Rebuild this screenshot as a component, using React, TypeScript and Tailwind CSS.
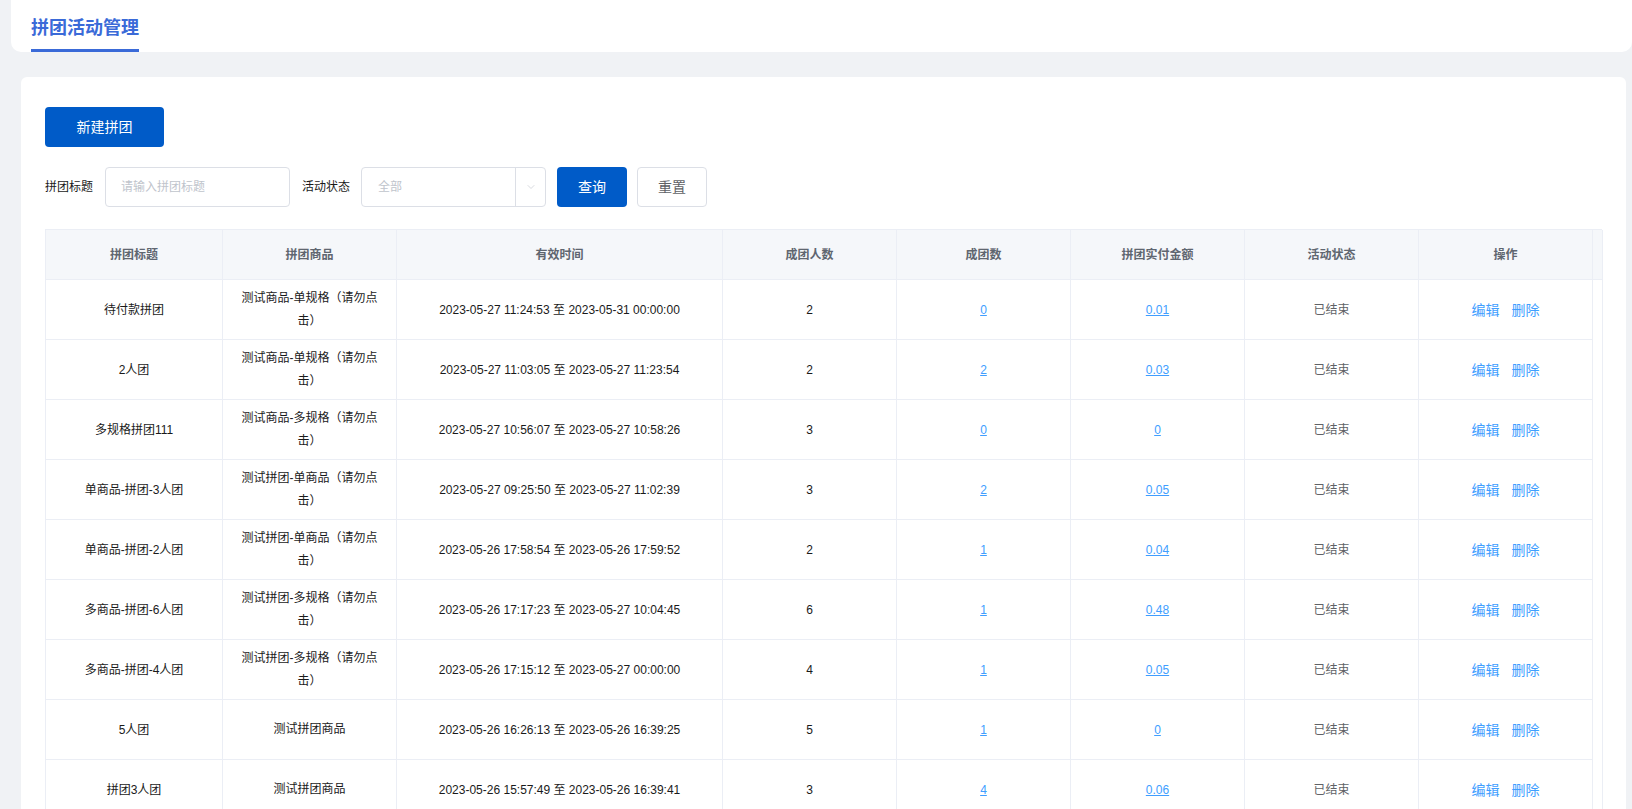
import { ChevronDown } from 'lucide-react';

type Row = {
  title: string;
  product: string;
  time: string;
  people: string;
  groups: string;
  amount: string;
};

const ROWS: Row[] = [
  { title: '待付款拼团', product: '测试商品-单规格（请勿点击）', time: '2023-05-27 11:24:53 至 2023-05-31 00:00:00', people: '2', groups: '0', amount: '0.01' },
  { title: '2人团', product: '测试商品-单规格（请勿点击）', time: '2023-05-27 11:03:05 至 2023-05-27 11:23:54', people: '2', groups: '2', amount: '0.03' },
  { title: '多规格拼团111', product: '测试商品-多规格（请勿点击）', time: '2023-05-27 10:56:07 至 2023-05-27 10:58:26', people: '3', groups: '0', amount: '0' },
  { title: '单商品-拼团-3人团', product: '测试拼团-单商品（请勿点击）', time: '2023-05-27 09:25:50 至 2023-05-27 11:02:39', people: '3', groups: '2', amount: '0.05' },
  { title: '单商品-拼团-2人团', product: '测试拼团-单商品（请勿点击）', time: '2023-05-26 17:58:54 至 2023-05-26 17:59:52', people: '2', groups: '1', amount: '0.04' },
  { title: '多商品-拼团-6人团', product: '测试拼团-多规格（请勿点击）', time: '2023-05-26 17:17:23 至 2023-05-27 10:04:45', people: '6', groups: '1', amount: '0.48' },
  { title: '多商品-拼团-4人团', product: '测试拼团-多规格（请勿点击）', time: '2023-05-26 17:15:12 至 2023-05-27 00:00:00', people: '4', groups: '1', amount: '0.05' },
  { title: '5人团', product: '测试拼团商品', time: '2023-05-26 16:26:13 至 2023-05-26 16:39:25', people: '5', groups: '1', amount: '0' },
  { title: '拼团3人团', product: '测试拼团商品', time: '2023-05-26 15:57:49 至 2023-05-26 16:39:41', people: '3', groups: '4', amount: '0.06' },
];

const HEADERS = ['拼团标题', '拼团商品', '有效时间', '成团人数', '成团数', '拼团实付金额', '活动状态', '操作'];

const GRID = 'grid grid-cols-[177px_174px_326px_174px_174px_174px_174px_174px_10px]';

export default function App() {
  return (
    <div className="h-screen overflow-hidden bg-[#f0f2f5] font-['Liberation_Sans','Noto_Sans_CJK_SC',sans-serif] text-[#1a1a1a]">
      {/* Tabs bar */}
      <div className="ml-[11px] h-[52px] bg-white rounded-b-[10px] pl-5 flex">
        <div className="flex flex-col">
          <div className="mt-4 text-[18px] leading-6 font-bold text-[#3a6ad8]">拼团活动管理</div>
          <div className="mt-auto h-[3px] bg-[#3a6ad8]" />
        </div>
      </div>

      {/* Main card */}
      <div className="mt-[25px] ml-[21px] mr-[6px] bg-white rounded-md px-6 pt-[30px] pb-6">
        <button className="h-10 w-[119px] rounded-[4px] bg-[#005bc8] text-white text-sm">新建拼团</button>

        {/* Filters */}
        <div className="mt-5 flex items-center h-10 text-xs">
          <span>拼团标题</span>
          <div className="ml-3 w-[185px] h-10 border border-[#dcdfe6] rounded-[4px] flex items-center px-[15px] text-[#c0c4cc]">
            请输入拼团标题
          </div>
          <span className="ml-3">活动状态</span>
          <div className="ml-[11px] w-[185px] h-10 border border-[#dcdfe6] rounded-[4px] flex items-center">
            <span className="flex-1 pl-4 text-[#c0c4cc]">全部</span>
            <div className="w-[30px] h-full border-l border-[#dcdfe6] flex items-center justify-center">
              <ChevronDown size={12} strokeWidth={1.25} className="text-[#c0c4cc]" />
            </div>
          </div>
          <button className="ml-[11px] w-[70px] h-10 rounded-[4px] bg-[#005bc8] text-white text-sm">查询</button>
          <button className="ml-[10px] w-[70px] h-10 rounded-[4px] border border-[#dcdfe6] text-[#606266] text-sm">重置</button>
        </div>

        {/* Table */}
        <div className="mt-[22px] w-[1557px] border-t border-l border-[#ebeef5] text-xs">
          <div className={`${GRID} h-[50px] bg-[#f5f7fa]`}>
            {HEADERS.map((h) => (
              <div key={h} className="flex items-center justify-center border-r border-b border-[#ebeef5] font-semibold text-[#5f6670]">
                {h}
              </div>
            ))}
            <div className="border-r border-b border-[#ebeef5]" />
          </div>
          {ROWS.map((r, i) => (
            <div key={i} className={`${GRID} h-[60px]`}>
              <div className="flex items-center justify-center border-r border-b border-[#ebeef5] px-[10px] text-center">{r.title}</div>
              <div className="flex items-center justify-center border-r border-b border-[#ebeef5] px-[10px] text-center leading-[23px]">{r.product}</div>
              <div className="flex items-center justify-center border-r border-b border-[#ebeef5] px-[10px]">{r.time}</div>
              <div className="flex items-center justify-center border-r border-b border-[#ebeef5]">{r.people}</div>
              <div className="flex items-center justify-center border-r border-b border-[#ebeef5]">
                <span className="text-[#409eff] underline">{r.groups}</span>
              </div>
              <div className="flex items-center justify-center border-r border-b border-[#ebeef5]">
                <span className="text-[#409eff] underline">{r.amount}</span>
              </div>
              <div className="flex items-center justify-center border-r border-b border-[#ebeef5] text-[#606266]">已结束</div>
              <div className="flex items-center justify-center gap-3 border-r border-b border-[#ebeef5] text-sm text-[#409eff]">
                <span>编辑</span>
                <span>删除</span>
              </div>
              <div className="border-r border-[#ebeef5]" />
            </div>
          ))}
        </div>
      </div>
    </div>
  );
}
